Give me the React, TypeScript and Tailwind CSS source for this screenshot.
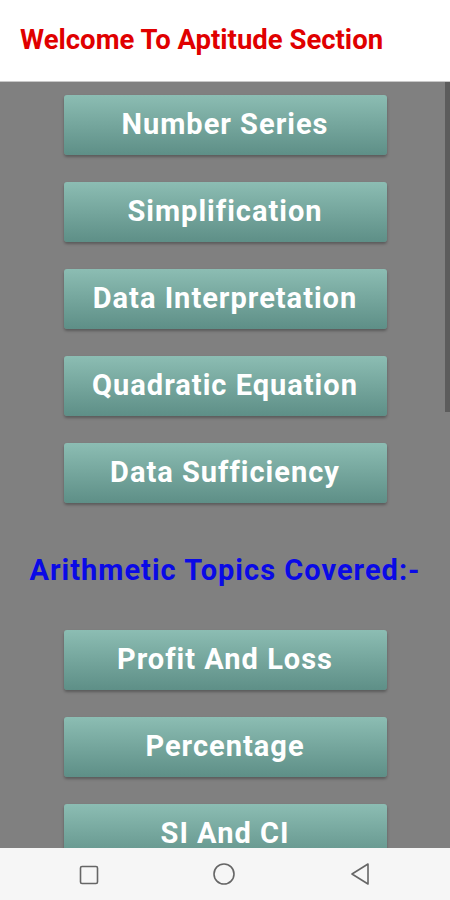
const topics = [
  "Number Series",
  "Simplification",
  "Data Interpretation",
  "Quadratic Equation",
  "Data Sufficiency",
];

const arithmetic = ["Profit And Loss", "Percentage", "SI And CI"];

function TopicButton({ label }: { label: string }) {
  return (
    <button
      className="flex h-[60px] w-[323px] shrink-0 items-center justify-center rounded-[3px] bg-gradient-to-b from-[#8cbdb3] to-[#5e8f87] text-[29px] font-bold tracking-[1px] text-white shadow-[0_2px_3px_rgba(0,0,0,0.3)]"
      style={{ fontFamily: "Roboto, sans-serif" }}
    >
      {label}
    </button>
  );
}

export default function App() {
  return (
    <div
      className="flex h-[900px] w-[450px] flex-col overflow-hidden bg-white"
      style={{ fontFamily: "Roboto, sans-serif" }}
    >
      <header className="flex h-[82px] shrink-0 items-center border-b border-[#c8c8c8] px-5 pb-[2px]">
        <h1 className="text-[27.5px] font-bold text-[#e00000]">Welcome To Aptitude Section</h1>
      </header>

      <main className="relative flex-1 overflow-hidden bg-[#808080]">
        <div className="flex flex-col items-center gap-[27px] pt-[13px]">
          {topics.map((t) => (
            <TopicButton key={t} label={t} />
          ))}
          <h2 className="mb-[12px] mt-[19px] text-[29px] font-bold leading-[42px] tracking-[1px] text-[#0a0ae6]">
            Arithmetic Topics Covered:-
          </h2>
          {arithmetic.map((t) => (
            <TopicButton key={t} label={t} />
          ))}
        </div>
        <div className="absolute right-0 top-0 h-[330px] w-[5px] bg-[#5c5c5c]" />
      </main>

      <nav className="flex h-[52px] shrink-0 items-center justify-between bg-[#f6f6f6] px-[79px]">
        <svg width="20" height="20" viewBox="0 0 20 20" className="mt-[2px]">
          <rect x="1.5" y="1.5" width="17" height="17" rx="1.5" fill="none" stroke="#666" strokeWidth="1.6" />
        </svg>
        <svg width="24" height="24" viewBox="0 0 24 24">
          <circle cx="12" cy="12" r="10" fill="none" stroke="#666" strokeWidth="1.6" />
        </svg>
        <svg width="22" height="24" viewBox="0 0 22 24">
          <path d="M19 2 L3 12 L19 22 Z" fill="none" stroke="#666" strokeWidth="1.6" strokeLinejoin="round" />
        </svg>
      </nav>
    </div>
  );
}
